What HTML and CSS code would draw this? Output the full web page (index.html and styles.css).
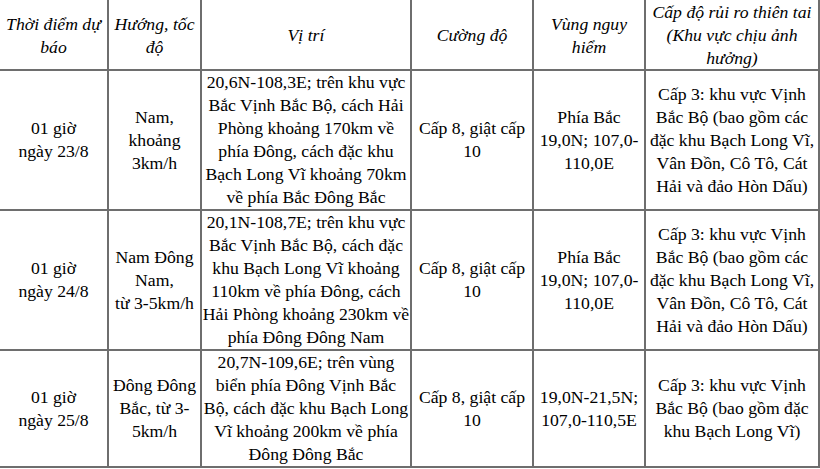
FILE: index.html
```html
<!DOCTYPE html>
<html lang="vi">
<head>
<meta charset="utf-8">
<title>Dự báo</title>
<link rel="stylesheet" href="styles.css">
</head>
<body>
<div class="grid">
  <div class="cell head">Thời điểm dự<br>báo</div>
  <div class="cell head">Hướng, tốc<br>độ</div>
  <div class="cell head">Vị trí</div>
  <div class="cell head">Cường độ</div>
  <div class="cell head">Vùng nguy<br>hiểm</div>
  <div class="cell head">Cấp độ rủi ro thiên tai<br>(Khu vực chịu ảnh<br>hưởng)</div>

  <div class="cell">01 giờ<br>ngày 23/8</div>
  <div class="cell">Nam,<br>khoảng<br>3km/h</div>
  <div class="cell">20,6N-108,3E; trên khu vực<br>Bắc Vịnh Bắc Bộ, cách Hải<br>Phòng khoảng 170km về<br>phía Đông, cách đặc khu<br>Bạch Long Vĩ khoảng 70km<br>về phía Bắc Đông Bắc</div>
  <div class="cell">Cấp 8, giật cấp<br>10</div>
  <div class="cell">Phía Bắc<br>19,0N; 107,0-<br>110,0E</div>
  <div class="cell">Cấp 3: khu vực Vịnh<br>Bắc Bộ (bao gồm các<br>đặc khu Bạch Long Vĩ,<br>Vân Đồn, Cô Tô, Cát<br>Hải và đảo Hòn Dấu)</div>

  <div class="cell">01 giờ<br>ngày 24/8</div>
  <div class="cell">Nam Đông<br>Nam,<br>từ 3-5km/h</div>
  <div class="cell">20,1N-108,7E; trên khu vực<br>Bắc Vịnh Bắc Bộ, cách đặc<br>khu Bạch Long Vĩ khoảng<br>110km về phía Đông, cách<br>Hải Phòng khoảng 230km về<br>phía Đông Đông Nam</div>
  <div class="cell">Cấp 8, giật cấp<br>10</div>
  <div class="cell">Phía Bắc<br>19,0N; 107,0-<br>110,0E</div>
  <div class="cell">Cấp 3: khu vực Vịnh<br>Bắc Bộ (bao gồm các<br>đặc khu Bạch Long Vĩ,<br>Vân Đồn, Cô Tô, Cát<br>Hải và đảo Hòn Dấu)</div>

  <div class="cell">01 giờ<br>ngày 25/8</div>
  <div class="cell">Đông Đông<br>Bắc, từ 3-<br>5km/h</div>
  <div class="cell">20,7N-109,6E; trên vùng<br>biển phía Đông Vịnh Bắc<br>Bộ, cách đặc khu Bạch Long<br>Vĩ khoảng 200km về phía<br>Đông Đông Bắc</div>
  <div class="cell">Cấp 8, giật cấp<br>10</div>
  <div class="cell">19,0N-21,5N;<br>107,0-110,5E</div>
  <div class="cell">Cấp 3: khu vực Vịnh<br>Bắc Bộ (bao gồm đặc<br>khu Bạch Long Vĩ)</div>
</div>
</body>
</html>
```

FILE: styles.css
```css
html, body {
  margin: 0;
  padding: 0;
  background: #ffffff;
  overflow: hidden;
}

body {
  width: 820px;
  height: 469px;
}

.grid {
  display: grid;
  grid-template-columns: 107px 91px 208px 120px 110px 172px;
  grid-template-rows: 69px 138px 138px 115px;
  gap: 2px;
  padding: 2px;
  margin: -2px 0 0 -2px;
  width: max-content;
  background: #6e6e6e;
  font-family: "Liberation Serif", "Times New Roman", serif;
  font-size: 17.7px;
  line-height: 23px;
  color: #000000;
}

.cell {
  background: #ffffff;
  display: flex;
  flex-direction: column;
  justify-content: center;
  align-items: center;
  text-align: center;
  white-space: nowrap;
}

.head {
  font-style: italic;
  padding-top: 2px;
}
```
